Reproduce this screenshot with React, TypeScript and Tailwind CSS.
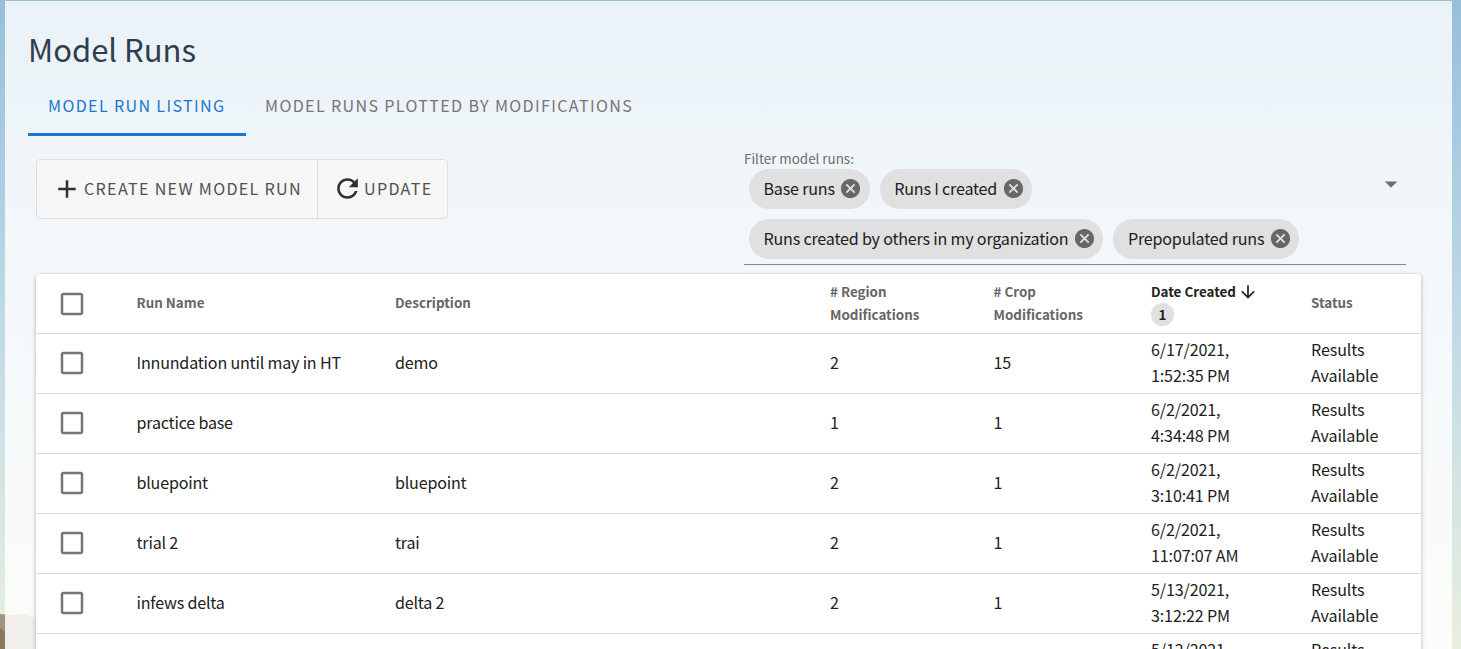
import { Fragment } from "react";

type Run = { name: string; description: string; regions: string; crops: string; date: string; time: string };

const runs: Run[] = [
  { name: "Innundation until may in HT", description: "demo", regions: "2", crops: "15", date: "6/17/2021,", time: "1:52:35 PM" },
  { name: "practice base", description: "", regions: "1", crops: "1", date: "6/2/2021,", time: "4:34:48 PM" },
  { name: "bluepoint", description: "bluepoint", regions: "2", crops: "1", date: "6/2/2021,", time: "3:10:41 PM" },
  { name: "trial 2", description: "trai", regions: "2", crops: "1", date: "6/2/2021,", time: "11:07:07 AM" },
  { name: "infews delta", description: "delta 2", regions: "2", crops: "1", date: "5/13/2021,", time: "3:12:22 PM" },
  { name: "", description: "", regions: "", crops: "", date: "5/12/2021,", time: "\u00a0" },
];

const columns = "grid grid-cols-[100.5px_258.5px_435px_163.5px_157.500px_160px_110px] border-b border-[#dedede]";

/* Sets capital I in a face that draws it as a plain bar. */
function Label({ text }: { text: string }) {
  return (
    <span>
      {text.split("I").map((part, index) => (
        <Fragment key={index}>
          {index > 0 && <span className="font-['Open_Sans',sans-serif] text-[1.03em] leading-none">I</span>}
          {part}
        </Fragment>
      ))}
    </span>
  );
}

function Checkbox() {
  return (
    <svg className="ml-[20.5px] size-[30px] fill-[#757575]" viewBox="0 0 24 24">
      <path d="M19 5v14H5V5h14m0-2H5c-1.100 0-2 .9-2 2v14c0 1.100.9 2 2 2h14c1.100 0 2-.9 2-2V5c0-1.100-.9-2-2-2z" />
    </svg>
  );
}

function Chip({ label }: { label: string }) {
  return (
    <span className="flex h-10 items-center rounded-full bg-[#e0e0e0] pr-[7.5px] pb-[2px] pl-[14.5px] text-[16.1px] tracking-[-0.2px] text-[#212121]">
      <Label text={label} />
      <svg className="ml-[4.5px] size-[23px] fill-[#676767]" viewBox="0 0 24 24">
        <path d="M12 2C6.470 2 2 6.470 2 12s4.470 10 10 10 10-4.470 10-10S17.530 2 12 2zm5 13.590L15.590 17 12 13.410 8.410 17 7 15.590 10.590 12 7 8.410 8.410 7 12 10.590 15.590 7 17 8.410 13.410 12 17 15.590z" />
      </svg>
    </span>
  );
}

function Header() {
  return (
    <div className={`${columns} h-[60px] items-center text-[13.4px] leading-[23px] font-bold text-[#666]`}>
      <Checkbox />
      <div className="pb-[2px]">Run Name</div>
      <div className="pb-[2px]">Description</div>
      <div className="pb-[2px]"># Region<br />Modifications</div>
      <div className="pb-[2px]"># Crop<br />Modifications</div>
      <div className="pb-px text-[#212121]">
        <div className="flex items-center gap-[2px]">
          Date Created
          <svg className="size-[20px] fill-[#212121]" viewBox="0 0 24 24">
            <path d="M20 12l-1.410-1.410L13 16.170V4h-2v12.170l-5.580-5.590L4 12l8 8 8-8z" />
          </svg>
        </div>
        <div className="flex size-[23px] items-center justify-center rounded-full bg-[#e0e0e0] pb-px">1</div>
      </div>
      <div className="pb-[2px]">Status</div>
    </div>
  );
}

export default function App() {
  return (
    <div className="relative isolate h-[649px] overflow-hidden bg-linear-to-b from-[#97bfda] via-[#bfd9e6] via-48% to-[#e9efdf] px-[5px] pt-px pr-[9px] font-['Noto_Sans_CJK_SC','Noto_Sans',sans-serif]">
      <svg className="absolute bottom-0 left-0 -z-10 h-[36px] w-[60px]" viewBox="0 0 60 36">
        <path d="M0 1L12 2 22 1 34 4 60 5V36H0Z" fill="#a0937f" />
        <path d="M0 15L5 19V36H0Z" fill="#8b795e" />
      </svg>
      <main className="h-[648px] overflow-hidden bg-linear-to-b from-white/80 to-white/85 pr-[31px] pl-[23px]">
        <h1 className="h-[75px] pt-[24px] text-[31px] leading-[48px] text-[#2c3e50]">Model Runs</h1>
        <nav className="flex h-[60px] text-[16.1px] leading-[58px] tracking-[1.34px]">
          <a className="h-[60px] w-[218px] border-b-[3px] border-[#1976d2] pl-5 text-[#1976d2]"><Label text="MODEL RUN LISTING" /></a>
          <a className="pl-[19px] text-[#757575]"><Label text="MODEL RUNS PLOTTED BY MODIFICATIONS" /></a>
        </nav>
        <div className="flex h-[138px] justify-between pr-[15px] pl-2">
          <div className="mt-[23px] flex h-[60px] rounded border border-[#dedede] bg-[#f6f6f6] text-[16.1px] tracking-[1.31px] text-[#505050]">
            <button className="flex w-[281px] items-center border-r border-[#dedede] pl-[15px]">
              <svg className="size-[30px] fill-[#303030]" viewBox="0 0 24 24">
                <path d="M19 13h-6v6h-2v-6H5v-2h6V5h2v6h6v2z" />
              </svg>
              <span className="ml-[2px] pb-[2px]">CREATE NEW MODEL RUN</span>
            </button>
            <button className="flex w-[129px] items-center pl-[14px]">
              <svg className="mb-px size-[31px] fill-[#303030]" viewBox="0 0 24 24">
                <path d="M17.650 6.350C16.200 4.900 14.210 4 12 4c-4.420 0-7.990 3.580-7.990 8s3.570 8 7.990 8c3.730 0 6.840-2.550 7.730-6h-2.080c-.82 2.330-3.040 4-5.650 4-3.310 0-6-2.690-6-6s2.690-6 6-6c1.660 0 3.140.69 4.220 1.780L13 11h7V4l-2.350 2.350z" />
              </svg>
              <span className="ml-px pb-[2px]">UPDATE</span>
            </button>
          </div>
          <div className="mt-[13px] h-[116px] w-[662px] border-b border-[#858a8d]">
            <div className="h-[20px] text-[13.4px] leading-[18px] text-[#6b6e70]">Filter model runs:</div>
            <div className="flex justify-between pl-[5px]">
              <div className="flex w-[570px] flex-wrap gap-[10px]">
                {["Base runs", "Runs I created", "Runs created by others in my organization", "Prepopulated runs"].map((label) => (
                  <Chip key={label} label={label} />
                ))}
              </div>
              <svg className="size-[30px] fill-[#6d7072]" viewBox="0 0 24 24">
                <path d="M7 10l5 5 5-5z" />
              </svg>
            </div>
          </div>
        </div>
        <div className="ml-2 h-[400px] w-[1385px] rounded-t bg-white text-[16.1px] leading-[26px] tracking-[-0.2px] text-[#212121] shadow-[0_1px_4px_rgba(0,0,0,0.3)]">
          <div className="tracking-normal">
            <Header />
          </div>
          {runs.map((run, index) => (
            <div key={index} className={`${columns} h-[60px] items-center`}>
              <div className="pb-[2px]"><Checkbox /></div>
              <div className="pb-[3px]"><Label text={run.name} /></div>
              <div className="pb-[3px]">{run.description}</div>
              <div className="pb-[3px]">{run.regions}</div>
              <div className="pb-[3px]">{run.crops}</div>
              <div className="pb-[3px] tracking-[-0.15px]">{run.date}<br />{run.time}</div>
              <div className="pb-[3px] tracking-[-0.1px]">Results<br />Available</div>
            </div>
          ))}
        </div>
      </main>
    </div>
  );
}
